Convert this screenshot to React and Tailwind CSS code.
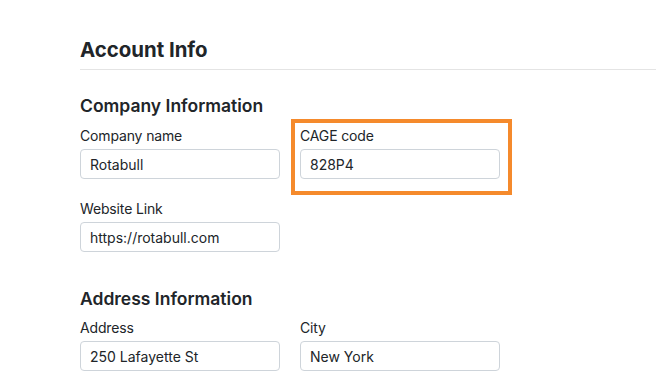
export default function App() {
  const inputCls =
    "w-[200px] h-[30px] border border-[#ced4da] rounded-[4px] pl-[9px] flex items-center text-[14px] text-[#212529] bg-white";
  const labelCls = "text-[14px] leading-[20px] tracking-[-0.15px] text-[#212529]";
  return (
    <div
      className="w-[656px] h-[383px] overflow-hidden bg-white pt-[38px] pl-[80px] text-[#212529]"
      style={{ fontFamily: "Inter, 'Noto Sans', sans-serif" }}
    >
      <h1 className="text-[20.4px] leading-[24px] font-bold">Account Info</h1>
      <div className="mt-[7px] h-px bg-[#e4e4e4]" />

      <h2 className="mt-[25px] text-[17.5px] leading-[22px] font-semibold">Company Information</h2>
      <div className="mt-[9px] flex gap-[20px]">
        <div className="flex flex-col">
          <div className={labelCls}>Company name</div>
          <div className={"mt-[3px] " + inputCls}>Rotabull</div>
          <div className={"mt-[20px] " + labelCls}>Website Link</div>
          <div className={"mt-[3px] " + inputCls}>https://rotabull.com</div>
        </div>
        <div className="relative flex flex-col self-start">
          <div className={labelCls}>CAGE code</div>
          <div className={"mt-[3px] " + inputCls}>828P4</div>
          <div className="absolute left-[-9px] top-[-7px] right-[-12px] bottom-[-16px] border-[4px] border-[#f58a2c]" />
        </div>
      </div>

      <h2 className="mt-[36px] text-[17.5px] leading-[22px] font-semibold">Address Information</h2>
      <div className="mt-[8px] flex gap-[20px]">
        <div className="flex flex-col">
          <div className={labelCls}>Address</div>
          <div className={"mt-[3px] " + inputCls}>250 Lafayette St</div>
        </div>
        <div className="flex flex-col">
          <div className={labelCls}>City</div>
          <div className={"mt-[3px] " + inputCls}>New York</div>
        </div>
      </div>
    </div>
  );
}
